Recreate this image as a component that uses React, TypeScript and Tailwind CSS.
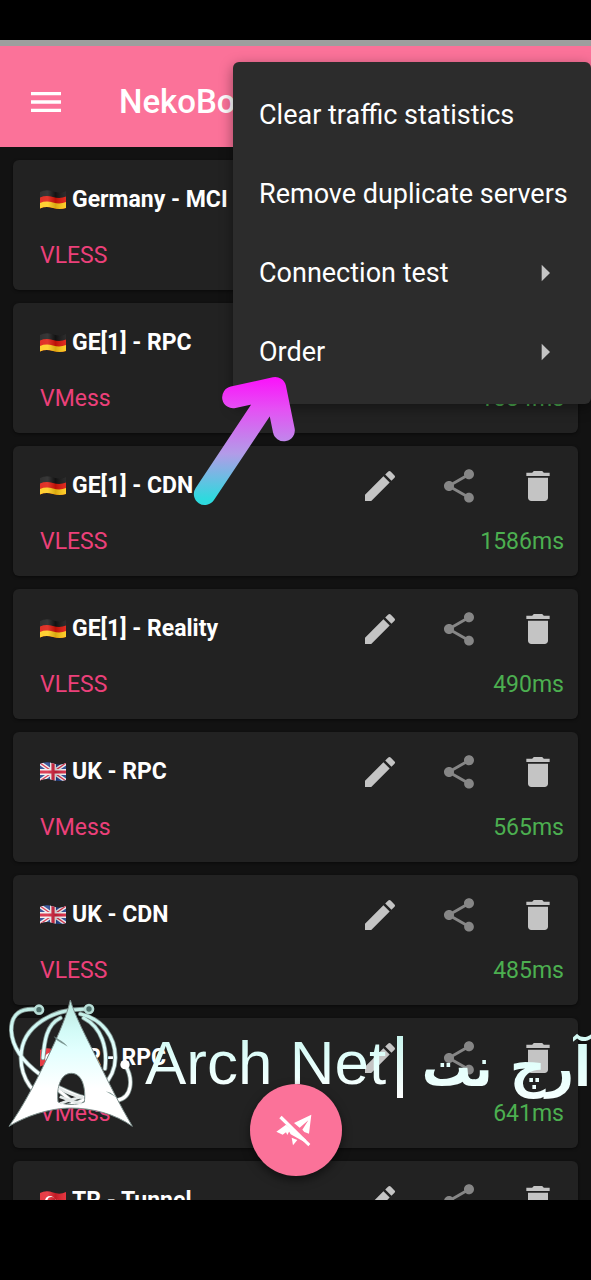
import React from 'react';
import { MdArrowRight, MdDelete, MdEdit, MdMenu, MdShare } from 'react-icons/md';

type Country = 'de' | 'gb' | 'tr';

interface Server {
  country: Country;
  name: string;
  protocol: string;
  latency?: string;
}

const servers: Server[] = [
  { country: 'de', name: 'Germany - MCI', protocol: 'VLESS' },
  { country: 'de', name: 'GE[1] - RPC', protocol: 'VMess', latency: '1084ms' },
  { country: 'de', name: 'GE[1] - CDN', protocol: 'VLESS', latency: '1586ms' },
  { country: 'de', name: 'GE[1] - Reality', protocol: 'VLESS', latency: '490ms' },
  { country: 'gb', name: 'UK - RPC', protocol: 'VMess', latency: '565ms' },
  { country: 'gb', name: 'UK - CDN', protocol: 'VLESS', latency: '485ms' },
  { country: 'tr', name: 'TR - RPC', protocol: 'VMess', latency: '641ms' },
  { country: 'tr', name: 'TR - Tunnel', protocol: 'VLESS' },
];

const menuItems = [
  { label: 'Clear traffic statistics', submenu: false },
  { label: 'Remove duplicate servers', submenu: false },
  { label: 'Connection test', submenu: true },
  { label: 'Order', submenu: true },
];

const wave = 'M0 2 Q6 -1 13 1.5 T26 1 V18 Q20 20 13 18 T0 18.5 Z';

function Flag({ country, id }: { country: Country; id: string }) {
  return (
    <svg viewBox="0 0 26 20" className="h-5 w-[26px] shrink-0" aria-hidden="true">
      <defs>
        <clipPath id={id}>
          <path d={wave} />
        </clipPath>
        <linearGradient id={id + 's'} x1="0" x2="1" y1="0" y2="0">
          <stop offset="0" stopColor="#fff" stopOpacity="0.12" />
          <stop offset="0.3" stopColor="#fff" stopOpacity="0.15" />
          <stop offset="0.6" stopColor="#000" stopOpacity="0.15" />
          <stop offset="1" stopColor="#fff" stopOpacity="0.1" />
        </linearGradient>
      </defs>
      <g clipPath={`url(#${id})`}>
        {country === 'de' && (
          <>
            <rect width="26" height="20" fill="#151515" />
            <path d="M0 7.5 Q6 5 13 7 T26 6.5 V20 H0 Z" fill="#dd1408" />
            <path d="M0 13 Q6 10.5 13 12.5 T26 12 V20 H0 Z" fill="#ffc914" />
          </>
        )}
        {country === 'gb' && (
          <>
            <rect width="26" height="20" fill="#20408c" />
            <path d="M0 1 L26 19 M26 1 L0 19" stroke="#eee" strokeWidth="4" />
            <path d="M0 1 L26 19 M26 1 L0 19" stroke="#d5213c" strokeWidth="1.3" />
            <path d="M13 0 V20 M0 10 H26" stroke="#eee" strokeWidth="6" />
            <path d="M13 0 V20 M0 10 H26" stroke="#d5213c" strokeWidth="3.2" />
          </>
        )}
        {country === 'tr' && (
          <>
            <rect width="26" height="20" fill="#e3202b" />
            <circle cx="10" cy="10" r="5" fill="#fff" />
            <circle cx="11.4" cy="10" r="4" fill="#e3202b" />
            <path d="M14 10 l3.6 -1.3 l-2.2 3.1 v-3.7 l2.2 3.1 z" fill="#fff" />
          </>
        )}
        <rect width="26" height="20" fill={`url(#${id}s)`} />
      </g>
    </svg>
  );
}

function ServerCard({ server, index }: { server: Server; index: number }) {
  return (
    <li className="shrink-0 rounded-md bg-[#222222] pt-5 pb-[18px] pl-[27px] shadow-[0_1px_3px_rgba(0,0,0,0.5)]">
      <div className="flex h-10 items-center pr-5">
        <Flag country={server.country} id={`flag${index}`} />
        <h2 className="ml-1.5 flex-1 truncate text-[23px] leading-8 font-bold text-white">{server.name}</h2>
        <div className="flex gap-[39px]">
          <button type="button" aria-label={`Edit ${server.name}`} className="text-[#c4c4c4]">
            <MdEdit size={40} />
          </button>
          <button type="button" aria-label={`Share ${server.name}`} className="text-[#868686]">
            <MdShare size={40} />
          </button>
          <button type="button" aria-label={`Delete ${server.name}`} className="text-[#c4c4c4]">
            <MdDelete size={40} />
          </button>
        </div>
      </div>
      <div className="mt-5 flex h-8 items-center justify-between pr-3.5 text-[23px] leading-8">
        <span className="text-[#ec407a]">{server.protocol}</span>
        <span className="text-[#4caf50]">{server.latency}</span>
      </div>
    </li>
  );
}

function OverflowMenu() {
  return (
    <div
      role="menu"
      className="absolute top-[62px] right-0 z-10 w-[358px] rounded-md bg-[#2c2c2c] py-[13px] shadow-[0_4px_14px_rgba(0,0,0,0.4)]"
    >
      {menuItems.map((item) => (
        <button
          key={item.label}
          type="button"
          role="menuitem"
          className="flex h-[79px] w-full items-center justify-between pr-[26px] pl-[26px] text-left text-[27px] leading-8 whitespace-nowrap text-white"
        >
          {item.label}
          {item.submenu && <MdArrowRight size={40} className="shrink-0 text-[#c4c4c4]" />}
        </button>
      ))}
    </div>
  );
}

function Pointer() {
  return (
    <svg viewBox="40 48 308 390" className="absolute top-[376px] left-[193px] z-20 h-[130px] w-[103px]" aria-hidden="true">
      <defs>
        <linearGradient id="pointer" gradientUnits="userSpaceOnUse" x1="0" y1="50" x2="0" y2="436">
          <stop offset="0" stopColor="#fb10fb" />
          <stop offset="0.25" stopColor="#e550f4" />
          <stop offset="0.6" stopColor="#b29ce8" />
          <stop offset="0.95" stopColor="#2edade" />
        </linearGradient>
      </defs>
      <path
        d="M75 402 L272 106 M160 112 L286 84 L312 211"
        fill="none"
        stroke="url(#pointer)"
        strokeWidth="66"
        strokeLinecap="round"
        strokeLinejoin="round"
      />
    </svg>
  );
}

const orbits =
  'M116 85 C62 78 32 96 33 148 C36 205 75 247 120 280 L226 370 ' +
  'M266 84 C160 78 64 134 62 225 C60 290 98 348 170 370 ' +
  'M240 98 C305 112 346 168 345 230 C344 295 290 350 205 372 ' +
  'M180 110 C138 130 132 180 128 230 M250 110 C304 138 322 200 314 262 ' +
  'M374 250 C400 292 396 350 350 357 C280 368 222 340 175 318';

function ArchLogo() {
  return (
    <svg viewBox="20 50 384 390" className="h-[130px] w-32 shrink-0" aria-hidden="true">
      <defs>
        <linearGradient id="arch" gradientUnits="userSpaceOnUse" x1="0" y1="55" x2="0" y2="435">
          <stop offset="0" stopColor="#b9e6dc" />
          <stop offset="0.25" stopColor="#d3fbf7" />
          <stop offset="0.4" stopColor="#e2fffe" />
          <stop offset="0.7" stopColor="#ffffff" />
        </linearGradient>
      </defs>
      <g fill="none" strokeLinecap="round">
        <path d={orbits} stroke="#7d8f8c" strokeWidth="14" />
        <path d={orbits} stroke="url(#arch)" strokeWidth="9" />
        <g stroke="#b5dcd5" strokeWidth="8" fill="#4d6f6a">
          <circle cx="116" cy="85" r="12" />
          <circle cx="266" cy="83" r="12" />
        </g>
      </g>
      <circle cx="374" cy="250" r="14" fill="#fff" />
      <path
        fillRule="evenodd"
        d="M210 56 C222 100 258 168 296 245 C326 306 360 374 396 435 C345 398 275 380 211 380 C147 380 72 406 26 435 C66 378 102 310 130 252 C166 180 198 110 210 56 Z M213 276 C180 276 168 320 173 362 C198 372 226 372 252 362 C257 320 246 276 213 276 Z"
        fill="url(#arch)"
        stroke="#7d8f8c"
        strokeWidth="3"
      />
      <path
        d="M160 164 C168 180 184 184 202 196 C190 180 176 176 160 164 Z M316 330 L352 350 L330 334 Z"
        fill="#7b9692"
      />
      <path
        d="M176 320 C196 334 224 344 250 350 M178 346 C200 354 222 362 244 366 M248 346 C226 350 204 358 180 366"
        fill="none"
        stroke="#e4eae9"
        strokeWidth="8"
      />
    </svg>
  );
}

function Watermark() {
  const ink = 'bg-gradient-to-b from-[#c9f5ee] via-[#e4fffc] to-white bg-clip-text text-transparent';
  return (
    <div className="pointer-events-none absolute right-0 bottom-[151px] left-[7px] flex h-[132px] items-center">
      <ArchLogo />
      <span className={`ml-2.5 font-['Liberation_Sans'] text-[62px] leading-[72px] whitespace-nowrap ${ink}`}>Arch Net</span>
      <div className="flex flex-1 items-center pt-2 pl-[11px]">
        <span className="h-[62px] w-1.5 shrink-0 bg-gradient-to-b from-[#c9f5ee] to-white" />
        <span
          dir="rtl"
          lang="fa"
          className={`ml-auto font-['DejaVu_Sans_Condensed','DejaVu_Sans'] text-[55px] leading-[100px] font-bold whitespace-nowrap ${ink}`}
        >
          آرچ نت
        </span>
      </div>
    </div>
  );
}

function ConnectButton() {
  return (
    <button
      type="button"
      aria-label="Connect"
      className="absolute bottom-[104px] left-1/2 z-10 flex size-[92px] -translate-x-1/2 items-center justify-center rounded-full bg-[#fb7299] text-white shadow-[0_4px_10px_rgba(0,0,0,0.5)]"
    >
      <svg viewBox="106 105 120 120" className="size-10" fill="currentColor" aria-hidden="true">
        <path d="M212 119 L205 176 L191 171 L185 164 L203 136 L177 158 L160 144 Z" />
        <path d="M107 170 L136 149 L158 167 L145 170 L140 180 L136 172 L126 179 Z" />
        <path d="M153 188 L170 195 L157 211 Z" />
        <path d="M140 160 L160 168 L196 194 L190 200 L150 178 Z" />
        <path d="M123 122 L209 207 L203 214 L116 130 Z" />
      </svg>
    </button>
  );
}

export default function App() {
  return (
    <div className="relative flex h-screen flex-col overflow-hidden bg-black pt-10 pb-20 font-['Roboto',sans-serif]">
      <div className="h-1.5 shrink-0 bg-[#9e9e9e]" />
      <header className="flex h-[101px] shrink-0 items-center bg-[#fb7299] pt-2.5 pl-[26px] text-white">
        <button type="button" aria-label="Open navigation">
          <MdMenu size={40} />
        </button>
        <h1 className="ml-[53px] text-[33px] leading-10 font-medium">NekoBox</h1>
      </header>
      <main className="min-h-0 flex-1 overflow-hidden bg-[#121212] px-[13px] pt-[13px]">
        <ul className="flex flex-col gap-[13px]">
          {servers.map((server, index) => (
            <ServerCard key={server.name} server={server} index={index} />
          ))}
        </ul>
      </main>
      <Watermark />
      <ConnectButton />
      <OverflowMenu />
      <Pointer />
    </div>
  );
}
